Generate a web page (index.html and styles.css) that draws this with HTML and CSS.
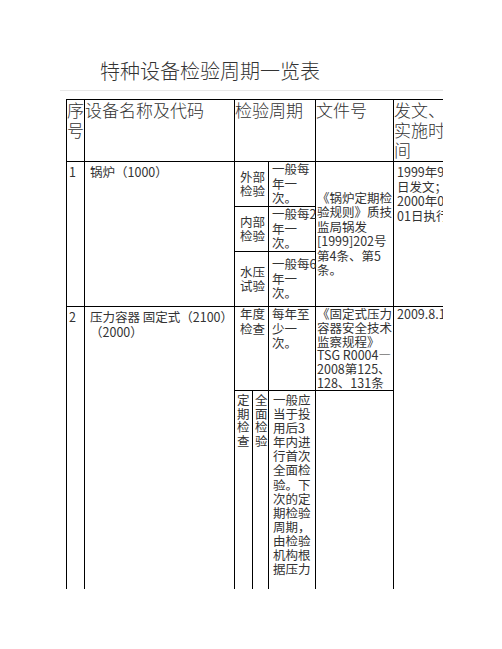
FILE: index.html
```html
<!DOCTYPE html>
<html lang="zh-CN">
<head>
<meta charset="utf-8">
<title>特种设备检验周期一览表</title>
<link rel="stylesheet" href="styles.css">
</head>
<body>
<div class="page">
  <h1 class="title">特种设备检验周期一览表</h1>
  <div class="rule"></div>
  <table class="grid">
    <colgroup>
      <col class="c-no"><col class="c-name"><col class="c-p1"><col class="c-p2"><col class="c-p3"><col class="c-doc"><col class="c-date">
    </colgroup>
    <tr class="r-head">
      <th class="h-no">序<br>号</th>
      <th class="h-name">设备名称及代码</th>
      <th class="h-period" colspan="3">检验周期</th>
      <th class="h-doc">文件号</th>
      <th class="h-date">发文、<br>实施时<br>间</th>
    </tr>
    <tr class="r-1a">
      <td class="no" rowspan="3">1</td>
      <td class="name" rowspan="3">锅炉（1000）</td>
      <td class="kind mid" colspan="2">外部<br>检验</td>
      <td class="cycle mid">一般每<br>年一<br>次。</td>
      <td class="doc mid" rowspan="3">《锅炉定期检<br>验规则》质技<br>监局锅发<br>[1999]202号<br>第4条、第5<br>条。</td>
      <td class="date" rowspan="3">1999年9月3<br>日发文；<br>2000年01月<br>01日执行。</td>
    </tr>
    <tr class="r-1b">
      <td class="kind mid" colspan="2">内部<br>检验</td>
      <td class="cycle mid">一般每2<br>年一<br>次。</td>
    </tr>
    <tr class="r-1c">
      <td class="kind mid" colspan="2">水压<br>试验</td>
      <td class="cycle mid">一般每6<br>年一<br>次。</td>
    </tr>
    <tr class="r-2a">
      <td class="no" rowspan="2">2</td>
      <td class="name" rowspan="2">压力容器 固定式（2100）<br>（2000）</td>
      <td class="kind" colspan="2">年度<br>检查</td>
      <td class="cycle">每年至<br>少一<br>次。</td>
      <td class="doc">《固定式压力<br>容器安全技术<br>监察规程》<br>TSG R0004—<br>2008第125、<br>128、131条</td>
      <td class="date" rowspan="2">2009.8.1</td>
    </tr>
    <tr class="r-2b">
      <td class="narrow">定<br>期<br>检<br>查</td>
      <td class="narrow">全<br>面<br>检<br>验</td>
      <td class="cycle long">一般应<br>当于投<br>用后3<br>年内进<br>行首次<br>全面检<br>验。下<br>次的定<br>期检验<br>周期，<br>由检验<br>机构根<br>据压力</td>
      <td class="doc"></td>
    </tr>
  </table>
</div>
</body>
</html>
```

FILE: styles.css
```css
html, body {
  margin: 0;
  padding: 0;
  background: #fff;
}

body {
  font-family: "Noto Sans CJK SC", "Noto Sans", sans-serif;
  color: #2a2a2a;
}

.page {
  width: 443px;
  height: 589px;
  overflow: hidden;
}

.title {
  margin: 0;
  padding: 59px 0 0 100px;
  font-size: 20px;
  line-height: 24px;
  font-weight: 300;
  color: #333;
  white-space: nowrap;
}

.rule {
  margin: 7px 0 0 60px;
  height: 1px;
  background: #e8e8e8;
}

.grid {
  margin: 8px 0 0 66px;
  border-collapse: collapse;
  table-layout: fixed;
  width: 405px;
}

.c-no { width: 18px; }
.c-name { width: 150px; }
.c-p1 { width: 18px; }
.c-p2 { width: 16px; }
.c-p3 { width: 47px; }
.c-doc { width: 78px; }
.c-date { width: 78px; }

.grid th,
.grid td {
  border: 1px solid #000;
  padding: 0;
  text-align: left;
  vertical-align: top;
  white-space: nowrap;
  overflow: visible;
}

.grid th {
  font-size: 17px;
  line-height: 20px;
  font-weight: 300;
  color: #333;
}

.grid td {
  font-size: 12.5px;
  line-height: 14.5px;
  color: #333;
}

.r-head { height: 62px; }
.r-1a { height: 45px; }
.r-1b { height: 45px; }
.r-1c { height: 55px; }
.r-2a { height: 84px; }
.r-2b { height: 240px; }

.h-no { padding-left: 1px; }
.h-name { padding-left: 6px; }
.h-period { padding-left: 6px; }
.h-doc { padding-left: 5px; }
.h-date { padding-left: 5px; }

.grid td.no { padding: 3px 0 0 2px; }
.grid td.name { padding: 3px 0 0 5px; }
.grid td.kind { padding: 0 0 0 5px; }
.grid td.cycle { padding: 1px 0 0 3px; }
.grid td.doc { padding: 0 0 0 1px; }
.grid td.date { padding: 3px 0 0 3px; }

.grid td.mid { vertical-align: middle; padding-top: 0; }

.r-2a td.kind,
.r-2a td.cycle,
.r-2a td.doc,
.r-2a td.date { padding-top: 0; }

.r-2a td.doc { line-height: 13.8px; }

.grid td.narrow {
  padding: 2px 0 0 2px;
  line-height: 13.5px;
}

.grid td.long {
  padding: 2px 0 0 4px;
  line-height: 14.1px;
}
```
